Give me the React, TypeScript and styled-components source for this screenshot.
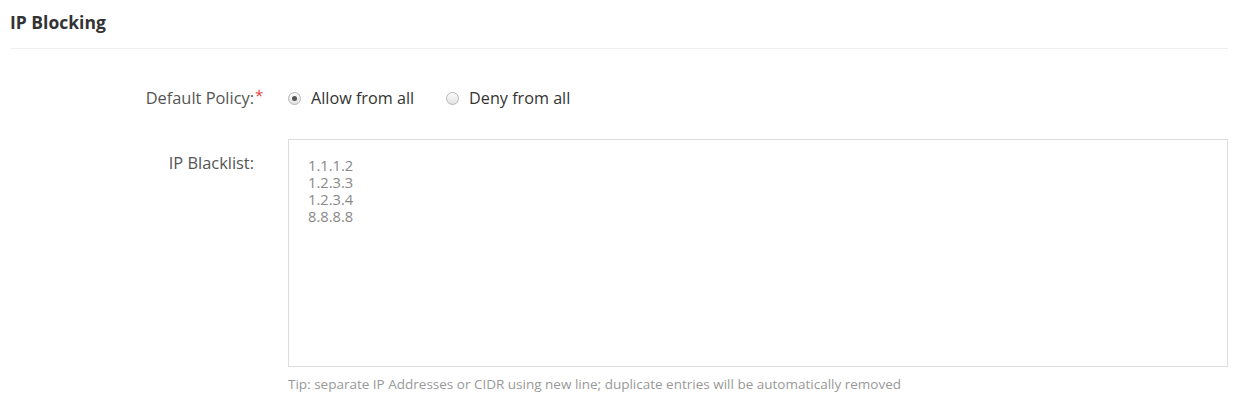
import styled, { createGlobalStyle } from "styled-components";

const blacklist = ["1.1.1.2", "1.2.3.3", "1.2.3.4", "8.8.8.8"];

export default function App() {
  return (
    <>
      <GlobalStyle />
      <Page>
        <Heading>IP Blocking</Heading>
        <Form>
          <Row>
            <Label>
              Default Policy:<Required>*</Required>
            </Label>
            <RadioGroup>
              <RadioOption>
                <Radio checked />
                Allow from all
              </RadioOption>
              <RadioOption>
                <Radio />
                Deny from all
              </RadioOption>
            </RadioGroup>
          </Row>

          <Row $top>
            <Label $pad>IP Blacklist:</Label>
            <Field>
              <ListBox>
                {blacklist.map((ip) => (
                  <div key={ip}>{ip}</div>
                ))}
              </ListBox>
              <Tip>
                Tip: separate IP Addresses or CIDR using new line; duplicate
                entries will be automatically removed
              </Tip>
            </Field>
          </Row>
        </Form>
      </Page>
    </>
  );
}

const GlobalStyle = createGlobalStyle`
  body {
    margin: 0;
    background: #ffffff;
    font-family: "Open Sans", "Noto Sans", sans-serif;
  }
`;

const Page = styled.div`
  padding: 0 20px 0 10px;
`;

const Heading = styled.h1`
  margin: 0;
  padding: 11px 0 14px;
  font-size: 17.5px;
  line-height: 23px;
  font-weight: 700;
  color: #333;
  border-bottom: 1px solid #eeeeee;
`;

const Form = styled.div`
  display: flex;
  flex-direction: column;
  gap: 31px;
  padding-top: 39px;
`;

const Row = styled.div<{ $top?: boolean }>`
  display: flex;
  align-items: ${(p) => (p.$top ? "flex-start" : "center")};
  gap: 34px;
`;

const Label = styled.div<{ $pad?: boolean }>`
  position: relative;
  width: 244px;
  flex: none;
  text-align: right;
  font-size: 16.4px;
  line-height: 20px;
  color: #555;
  padding-top: ${(p) => (p.$pad ? "14px" : "0")};
`;

const Required = styled.span`
  position: absolute;
  left: 100%;
  top: -3px;
  margin-left: 1px;
  color: #e0443e;
  font-size: 15px;
`;

const RadioGroup = styled.div`
  display: flex;
  align-items: center;
  gap: 32px;
`;

const RadioOption = styled.label`
  display: flex;
  align-items: center;
  gap: 10px;
  font-size: 16.2px;
  line-height: 20px;
  color: #333;
`;

const Radio = styled.span<{ checked?: boolean }>`
  width: 13px;
  height: 13px;
  box-sizing: border-box;
  border-radius: 50%;
  border: 1px solid #b5b5b5;
  background: linear-gradient(#fdfdfd, #e2e2e2);
  display: flex;
  align-items: center;
  justify-content: center;

  &::after {
    content: "";
    width: 5px;
    height: 5px;
    border-radius: 50%;
    background: #555;
    display: ${(p) => (p.checked ? "block" : "none")};
  }
`;

const Field = styled.div`
  flex: 1;
  display: flex;
  flex-direction: column;
`;

const ListBox = styled.div`
  height: 228px;
  box-sizing: border-box;
  border: 1px solid #dddddd;
  padding: 17px 19px;
  font-size: 14.7px;
  line-height: 17px;
  color: #888;
`;

const Tip = styled.div`
  margin-top: 9px;
  font-size: 13.5px;
  line-height: 16px;
  color: #999;
`;
